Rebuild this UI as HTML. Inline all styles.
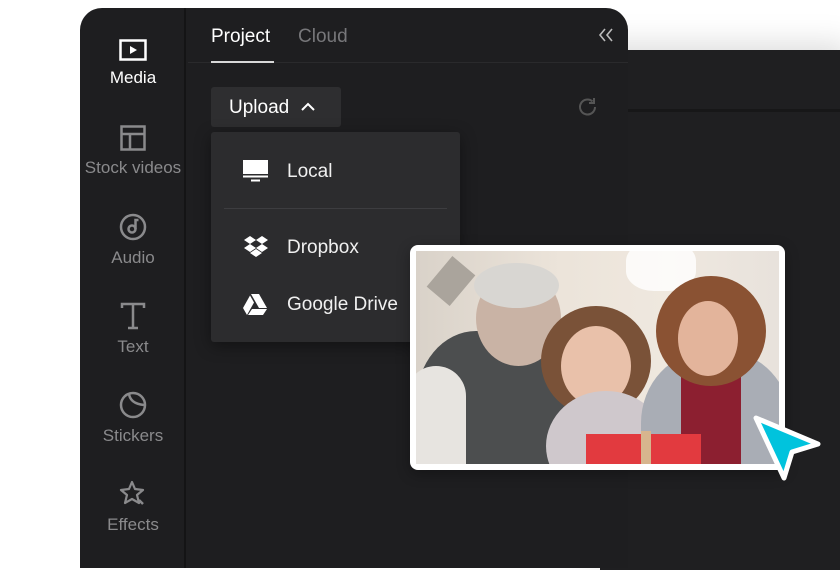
<!DOCTYPE html>
<html><head><meta charset="utf-8"><style>
*{margin:0;padding:0;box-sizing:border-box}
body{width:840px;height:560px;background:#fff;position:relative;overflow:hidden;font-family:"Liberation Sans",sans-serif}
.win2{position:absolute;left:600px;top:50px;width:260px;height:520px;background:#1f1f21;box-shadow:-10px -5px 30px rgba(0,0,0,.15)}
.win2 .hd{position:absolute;left:0;top:0;right:0;height:62px;border-bottom:3px solid #171718}
.panel{position:absolute;left:80px;top:8px;width:548px;height:560px;background:#1e1e20;border-radius:22px 22px 0 0;overflow:hidden}
.side{position:absolute;left:0;top:0;width:106px;height:100%;border-right:2px solid #141415}
.it{position:absolute;left:0;width:106px;text-align:center;color:#8a8a8c;font-size:17px}
.it svg{display:block;margin:0 auto 7px}
.tabs{position:absolute;left:108px;top:0;right:0;height:55px;border-bottom:1px solid #2a2a2c}
.t{position:absolute;top:18px;font-size:19px}
.btn{position:absolute;left:131px;top:79px;width:130px;height:40px;background:#2e2e30;border-radius:3px;color:#fff;font-size:19px;padding:10px 0 0 18px}
.menu{position:absolute;left:131px;top:124px;width:249px;height:210px;background:#2c2c2e;border-radius:3px;box-shadow:0 4px 16px rgba(0,0,0,.4)}
.mi{position:absolute;left:76px;color:#f0f0f0;font-size:19px}
.card{position:absolute;left:410px;top:245px;width:375px;height:225px;background:#fff;border-radius:8px;padding:6px;box-shadow:0 4px 14px rgba(0,0,0,.3)}
.photo{width:100%;height:100%;position:relative;overflow:hidden;background:linear-gradient(90deg,#d9d2c9 0%,#ece4da 40%,#efe8df 70%,#e8e2dc 100%)}
.b{position:absolute;border-radius:50%}
</style></head><body>
<div class="win2"><div class="hd"></div></div>
<div class="panel">
 <div class="side">
  <div class="it" style="top:31px;color:#fff">
   <svg width="28" height="22" viewBox="0 0 28 22"><rect x="1.5" y="1.5" width="25" height="19" fill="none" stroke="#fff" stroke-width="2.5"/><path d="M11 7l7 4-7 4z" fill="#fff"/></svg>Media</div>
  <div class="it" style="top:117px">
   <svg width="26" height="26" viewBox="0 0 26 26"><rect x="1.5" y="1.5" width="23" height="23" fill="none" stroke="#8a8a8c" stroke-width="2.5"/><path d="M1.5 9h23M10 9v15" stroke="#8a8a8c" stroke-width="2.5"/></svg>Stock videos</div>
  <div class="it" style="top:205px">
   <svg width="28" height="28" viewBox="0 0 28 28"><circle cx="14" cy="14" r="12" fill="none" stroke="#8a8a8c" stroke-width="2.5"/><circle cx="13" cy="16" r="3.5" fill="none" stroke="#8a8a8c" stroke-width="2.5"/><path d="M16.5 16V7h3" fill="none" stroke="#8a8a8c" stroke-width="2.5"/></svg>Audio</div>
  <div class="it" style="top:294px">
   <svg width="26" height="28" viewBox="0 0 26 28"><path d="M2 6V2h22v4M13 2v24M8 26h10" fill="none" stroke="#8a8a8c" stroke-width="2.5"/></svg>Text</div>
  <div class="it" style="top:383px">
   <svg width="28" height="28" viewBox="0 0 28 28"><circle cx="14" cy="14" r="12" fill="none" stroke="#8a8a8c" stroke-width="2.5"/><path d="M10 3c1 6 5 10 15 11" fill="none" stroke="#8a8a8c" stroke-width="2.5"/></svg>Stickers</div>
  <div class="it" style="top:472px">
   <svg width="28" height="28" viewBox="0 0 28 28"><path d="M13 2l3 7 8 1-6 5 2 8-7-4-7 4 2-8-6-5 8-1z" fill="none" stroke="#8a8a8c" stroke-width="2.2" stroke-linejoin="round"/><path d="M20 20l4 4" stroke="#8a8a8c" stroke-width="2.5"/></svg>Effects</div>
 </div>
 <div class="tabs">
  <div class="t" style="left:23px;color:#fff">Project</div>
  <div class="t" style="left:110px;color:#77777a">Cloud</div>
  <div style="position:absolute;left:23px;top:53px;width:63px;height:2px;background:#d8d8d8"></div>
  <svg style="position:absolute;left:410px;top:20px" width="16" height="14" viewBox="0 0 16 14"><path d="M7 1L2 7l5 6M14 1L9 7l5 6" fill="none" stroke="#bbb" stroke-width="1.6"/></svg>
 </div>
 <svg style="position:absolute;left:497px;top:88px" width="22" height="22" viewBox="0 0 22 22"><path d="M18 11a7.5 7.5 0 1 1-2.5-5.6" fill="none" stroke="#555" stroke-width="2"/><path d="M17 2v5h-5" fill="none" stroke="#555" stroke-width="2"/></svg>
 <div class="btn">Upload <svg style="margin-left:6px;vertical-align:2px" width="14" height="9" viewBox="0 0 14 9"><path d="M1 8l6-6 6 6" fill="none" stroke="#fff" stroke-width="2"/></svg></div>
 <div class="menu">
  <svg style="position:absolute;left:32px;top:28px" width="25" height="22" viewBox="0 0 25 22"><rect x="0" y="0" width="25" height="14" fill="#fff"/><rect x="0" y="15.5" width="25" height="2" fill="#fff"/><rect x="8" y="19.5" width="9" height="2" fill="#fff"/></svg>
  <div class="mi" style="top:29px">Local</div>
  <div style="position:absolute;left:13px;right:13px;top:76px;height:1px;background:#3d3d40"></div>
  <svg style="position:absolute;left:32px;top:104px" width="26" height="22" viewBox="0 0 26 22"><path d="M7 0l6 4-6 4-6-4zM19 0l6 4-6 4-6-4zM7 8l6 4-6 4-6-4zM19 8l6 4-6 4-6-4zM13 13l6 4-6 4-6-4z" fill="#fff"/></svg>
  <div class="mi" style="top:105px">Dropbox</div>
  <svg style="position:absolute;left:32px;top:162px" width="24" height="21" viewBox="0 0 24 21"><path d="M8 0h8l8 14h-8zM7 1.5l4 7-7 12.5-4-7zM9 15h15l-4 6H5z" fill="#fff"/></svg>
  <div class="mi" style="top:162px">Google Drive</div>
 </div>
</div>
<div class="card"><div class="photo">
 <div class="b" style="left:210px;top:-10px;width:70px;height:50px;background:#fff;opacity:.8;border-radius:40%"></div>
 <div style="position:absolute;left:20px;top:10px;width:30px;height:40px;background:#aaa49c;transform:rotate(40deg)"></div>
 <div class="b" style="left:0;top:80px;width:150px;height:180px;background:#4c4e4f;border-radius:40% 40% 0 0"></div>
 <div style="position:absolute;left:-10px;top:115px;width:60px;height:110px;background:#e7e4e0;border-radius:30px 30px 0 0"></div>
 <div class="b" style="left:60px;top:20px;width:85px;height:95px;background:#c9b3a5"></div>
 <div class="b" style="left:58px;top:12px;width:85px;height:45px;background:#d8d6d2"></div>
 <div class="b" style="left:125px;top:55px;width:110px;height:110px;background:#7a5238"></div>
 <div class="b" style="left:145px;top:75px;width:70px;height:80px;background:#e9c1aa"></div>
 <div class="b" style="left:130px;top:140px;width:120px;height:110px;background:#cfc8cc"></div>
 <div class="b" style="left:225px;top:100px;width:150px;height:160px;background:#a9adb5;border-radius:45% 45% 0 0"></div>
 <div style="position:absolute;left:265px;top:120px;width:60px;height:110px;background:#8c1f30"></div>
 <div class="b" style="left:240px;top:25px;width:110px;height:110px;background:#8a5233"></div>
 <div class="b" style="left:262px;top:50px;width:60px;height:75px;background:#e3b49b"></div>
 <div style="position:absolute;left:170px;top:183px;width:115px;height:40px;background:#e23a3f"></div>
 <div style="position:absolute;left:225px;top:180px;width:10px;height:40px;background:#d7b58e"></div>
</div></div>
<svg style="position:absolute;left:748px;top:412px" width="80" height="80" viewBox="0 0 80 80"><path d="M8 6L70 32L44 40L36 66Z" fill="#00c3dd" stroke="#fff" stroke-width="5" stroke-linejoin="round"/></svg>
</body></html>
